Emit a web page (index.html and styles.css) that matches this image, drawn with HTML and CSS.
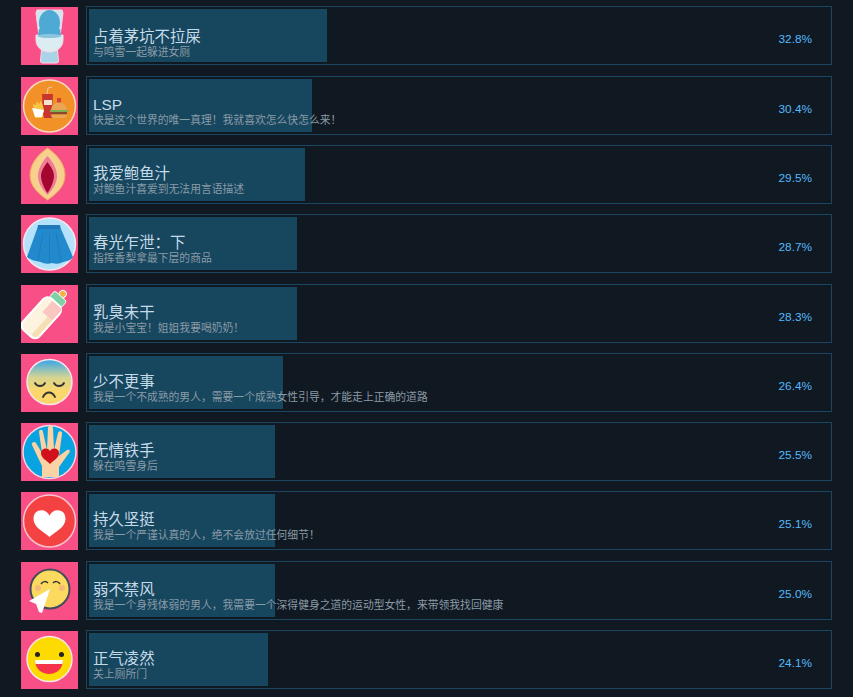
FILE: index.html
```html
<!DOCTYPE html>
<html lang="zh">

<head>
    <meta charset="UTF-8">
    <title>成就</title>
    <link rel="stylesheet" href="styles.css">
</head>

<body>
    <main class="achievements">
        <div class="row">
            <div class="icon">
                <svg viewBox="0 0 57 58" width="57" height="58">
                    <path d="M16 3h25l1 3-3 24H18L15 6z" fill="#cfe6f0" stroke="#f6dbe6"/>
                    <path d="M21 38h15l1.500 16a2 2 0 0 1-2 2H21.500a2 2 0 0 1-2-2z" fill="#a9d3e6" stroke="#f6dbe6"/>
                    <path d="M15 28h27v5c0 7-6 12-13.500 12S15 40 15 33z" fill="#dcecf3" stroke="#f6dbe6"/>
                    <ellipse cx="28.500" cy="16" rx="10.500" ry="13" fill="#4ea9d4"/>
                    <path d="M18 22h21l1 6H17z" fill="#4ea9d4"/>
                    <ellipse cx="28.500" cy="29" rx="12" ry="2" fill="#8ec5de"/>
                </svg>
            </div>
            <div class="box">
                <div class="bar" style="width: 238px"></div>
                <div class="text">
                    <div class="title">占着茅坑不拉屎</div>
                    <div class="desc">与鸣雪一起躲进女厕</div>
                </div>
                <div class="percent">32.8%</div>
            </div>
        </div>

        <div class="row">
            <div class="icon">
                <svg viewBox="0 0 57 58" width="57" height="58">
                    <circle cx="28.500" cy="29" r="26" fill="#f39129" stroke="#fbd9c0" stroke-width="1.500"/>
                    <path d="M26 17l1-6 4-1" fill="none" stroke="#f4c7a8" stroke-width="1"/>
                    <path d="M21 17h11l-1 20h-9z" fill="#c8362f"/>
                    <rect x="23" y="23" width="8" height="5" fill="#f6e2d0"/>
                    <path d="M12 27l3 1 1-4 2 3 2-3 2 5 1 4-2 8H14z" fill="#f7c744"/>
                    <path d="M11 31l12 2-2 7H14z" fill="#fff"/>
                    <path d="M22 36h8l3 3-2 2h-8z" fill="#c8362f"/>
                    <rect x="36" y="21" width="4" height="5" fill="#d8403a"/>
                    <path d="M30 33c1-10 15-10 16 0z" fill="#e9a654"/>
                    <rect x="29" y="33" width="18" height="2" fill="#7fae55"/>
                    <rect x="30" y="35" width="16" height="2.500" fill="#8a4b2a"/>
                    <path d="M30 37.500h16a3 3 0 0 1-3 3.500H33a3 3 0 0 1-3-3.500z" fill="#e9a654"/>
                </svg>
            </div>
            <div class="box">
                <div class="bar" style="width: 223px"></div>
                <div class="text">
                    <div class="title">LSP</div>
                    <div class="desc">快是这个世界的唯一真理！我就喜欢怎么快怎么来！</div>
                </div>
                <div class="percent">30.4%</div>
            </div>
        </div>

        <div class="row">
            <div class="icon">
                <svg viewBox="0 0 57 58" width="57" height="58">
                    <path d="M26.500 2C35 8 44 17 44 29S35 48 26.500 54C18 48 9 41 9 29S18 8 26.500 2z" fill="#f7d08e" stroke="#f5a860"/>
                    <path d="M26.500 10C32 16 36 23 36 30S32 43 26.500 49C21 43 17 37 17 30S21 16 26.500 10z" fill="#ee7c96"/>
                    <path d="M26.500 16C30 21 33 25 33 30S30 42 26.500 47C23 42 20 35 20 30S23 21 26.500 16z" fill="#a5062f"/>
                </svg>
            </div>
            <div class="box">
                <div class="bar" style="width: 216px"></div>
                <div class="text">
                    <div class="title">我爱鲍鱼汁</div>
                    <div class="desc">对鲍鱼汁喜爱到无法用言语描述</div>
                </div>
                <div class="percent">29.5%</div>
            </div>
        </div>

        <div class="row">
            <div class="icon">
                <svg viewBox="0 0 57 58" width="57" height="58">
                    <circle cx="28.500" cy="29" r="26" fill="#b5e2fb" stroke="#f5e6ee" stroke-width="1.500"/>
                    <path d="M17 10h22l1 5H16z" fill="#1f78b8"/>
                    <path d="M16 14h24l12 28c-2 4-8 4-12 6-3 1-6 1-9 0-3 1-6 1-9 0-4-2-12-2-16-6z" fill="#2289cc"/>
                    <path d="M22 18l-5 28M28.500 18v30M35 18l5 28" stroke="#1f7dbd" stroke-width="1" fill="none"/>
                </svg>
            </div>
            <div class="box">
                <div class="bar" style="width: 208px"></div>
                <div class="text">
                    <div class="title">春光乍泄：下</div>
                    <div class="desc">指挥香梨拿最下层的商品</div>
                </div>
                <div class="percent">28.7%</div>
            </div>
        </div>

        <div class="row">
            <div class="icon">
                <svg viewBox="0 0 57 58" width="57" height="58">
                    <g transform="translate(21 32) rotate(42)">
                        <circle cx="0" cy="-31" r="3.500" fill="#f4b13e" stroke="#fff"/>
                        <rect x="-8" y="-28" width="16" height="8" rx="2" fill="#7fcfa7" stroke="#e9f3ea"/>
                        <rect x="-11" y="-20" width="22" height="42" rx="6" fill="#fdf3df" stroke="#fff" stroke-width="2"/>
                        <path d="M-3-19H8a2 2 0 0 1 2 2V-4H-3z" fill="#f9c6c0"/>
                        <path d="M4-4h6V16a4 4 0 0 1-4 4H4z" fill="#f7dfb4"/>
                    </g>
                </svg>
            </div>
            <div class="box">
                <div class="bar" style="width: 208px"></div>
                <div class="text">
                    <div class="title">乳臭未干</div>
                    <div class="desc">我是小宝宝！姐姐我要喝奶奶！</div>
                </div>
                <div class="percent">28.3%</div>
            </div>
        </div>

        <div class="row">
            <div class="icon">
                <svg viewBox="0 0 57 58" width="57" height="58">
                    <defs>
                        <linearGradient id="sad" x1="0" y1="0" x2="0" y2="1">
                            <stop offset="0" stop-color="#34a6ea"/>
                            <stop offset=".4" stop-color="#d6d492"/>
                            <stop offset=".7" stop-color="#fbd76b"/>
                        </linearGradient>
                    </defs>
                    <circle cx="28.500" cy="28" r="22.500" fill="url(#sad)" stroke="#fbe6ee" stroke-width="1.500"/>
                    <path d="M14 29c2 4 8 4 10 0M33 29c2 4 8 4 10 0M22 43c3-6 9-6 12 0" fill="none" stroke="#333" stroke-width="1.800" stroke-linecap="round"/>
                </svg>
            </div>
            <div class="box">
                <div class="bar" style="width: 194px"></div>
                <div class="text">
                    <div class="title">少不更事</div>
                    <div class="desc">我是一个不成熟的男人，需要一个成熟女性引导，才能走上正确的道路</div>
                </div>
                <div class="percent">26.4%</div>
            </div>
        </div>

        <div class="row">
            <div class="icon">
                <svg viewBox="0 0 57 58" width="57" height="58">
                    <circle cx="28.500" cy="29" r="26.500" fill="#08a3e0" stroke="#f5d8e4" stroke-width="1.500"/>
                    <path d="M21 54V43L11 22c-1-3 3-4 4-2l6 10-3-21c0-3 4-3 4 0l4 18 1-22c0-3 5-3 5 0l1 22 4-17c1-3 5-2 4 1l-3 22 8-6c2-1 4 1 2 3L38 44V54z" fill="#fbd2a4"/>
                    <path d="M29 28c2-4 9-3 9 2 0 5-5 7-9 11-4-4-9-6-9-11 0-5 7-6 9-2z" fill="#d0111b"/>
                </svg>
            </div>
            <div class="box">
                <div class="bar" style="width: 186px"></div>
                <div class="text">
                    <div class="title">无情铁手</div>
                    <div class="desc">躲在鸣雪身后</div>
                </div>
                <div class="percent">25.5%</div>
            </div>
        </div>

        <div class="row">
            <div class="icon">
                <svg viewBox="0 0 57 58" width="57" height="58">
                    <circle cx="28.500" cy="29" r="26" fill="#f44242" stroke="#fbc4cc" stroke-width="1.500"/>
                    <path d="M28.500 24c3-8 16-8 16 3 0 8-9 12-16 18-7-6-16-10-16-18 0-11 13-11 16-3z" fill="#fff"/>
                </svg>
            </div>
            <div class="box">
                <div class="bar" style="width: 186px"></div>
                <div class="text">
                    <div class="title">持久坚挺</div>
                    <div class="desc">我是一个严谨认真的人，绝不会放过任何细节！</div>
                </div>
                <div class="percent">25.1%</div>
            </div>
        </div>

        <div class="row">
            <div class="icon">
                <svg viewBox="0 0 57 58" width="57" height="58">
                    <circle cx="29" cy="27" r="19.500" fill="#fcd95f" stroke="#454c5c" stroke-width="2"/>
                    <path d="M20 22c2-3 5-3 7-1M32 21c2-2 5-2 7 1" fill="none" stroke="#333" stroke-width="1.500"/>
                    <circle cx="17" cy="26" r="3" fill="#f7b878"/>
                    <circle cx="41" cy="26" r="3" fill="#f7b878"/>
                    <path d="M29 27L8 39l7 3 3 8 3 1z" fill="#fff"/>
                </svg>
            </div>
            <div class="box">
                <div class="bar" style="width: 186px"></div>
                <div class="text">
                    <div class="title">弱不禁风</div>
                    <div class="desc">我是一个身残体弱的男人，我需要一个深得健身之道的运动型女性，来带领我找回健康</div>
                </div>
                <div class="percent">25.0%</div>
            </div>
        </div>

        <div class="row">
            <div class="icon">
                <svg viewBox="0 0 57 58" width="57" height="58">
                    <circle cx="28.500" cy="28" r="22.500" fill="#fedb00" stroke="#fbe6ee" stroke-width="1.500"/>
                    <circle cx="16.500" cy="23.500" r="2.500" fill="#222"/>
                    <circle cx="40.500" cy="23.500" r="2.500" fill="#222"/>
                    <path d="M14 29h28c0 9-7 14-14 14S14 38 14 29z" fill="#f6334c"/>
                    <path d="M14 29h28l-.5 4h-27z" fill="#fff"/>
                </svg>
            </div>
            <div class="box">
                <div class="bar" style="width: 179px"></div>
                <div class="text">
                    <div class="title">正气凌然</div>
                    <div class="desc">关上厕所门</div>
                </div>
                <div class="percent">24.1%</div>
            </div>
        </div>
    </main>
</body>

</html>
```

FILE: styles.css
```css
body {
    margin: 0;
    background-color: #101822;
    font-family: "Liberation Sans", "Noto Sans CJK SC", sans-serif;
}

.achievements {
    display: flex;
    flex-direction: column;
    gap: 10.3px;
    padding: 6.35px 21px 0;
}

.row {
    display: flex;
    gap: 8px;
}

.icon {
    width: 57px;
    height: 58px;
    margin-top: 1px;
    background-color: #f74f86;
    flex-shrink: 0;
}

.icon svg {
    display: block;
}

.box {
    position: relative;
    display: flex;
    flex: 1;
    align-items: flex-end;
    justify-content: space-between;
    box-sizing: border-box;
    height: 59px;
    padding: 0 19px 7px 6px;
    border: 1px solid #1b4560;
}

.bar {
    position: absolute;
    top: 2px;
    left: 2px;
    bottom: 2px;
    background-color: #17465f;
}

.text {
    position: relative;
}

/* la primera fila va un poco mas abajo */
.row:first-child .box {
    padding-bottom: 5px;
}

.row:first-child .percent {
    margin-bottom: 13px;
}

.title {
    font-size: 15.4px;
    line-height: 18px;
    color: #c6dbe8;
}

.desc {
    font-size: 10.8px;
    line-height: 13px;
    color: #8a9ba6;
}

.percent {
    position: relative;
    margin-bottom: 11px;
    font-size: 11.8px;
    line-height: 14px;
    color: #55b8f8;
}
```
